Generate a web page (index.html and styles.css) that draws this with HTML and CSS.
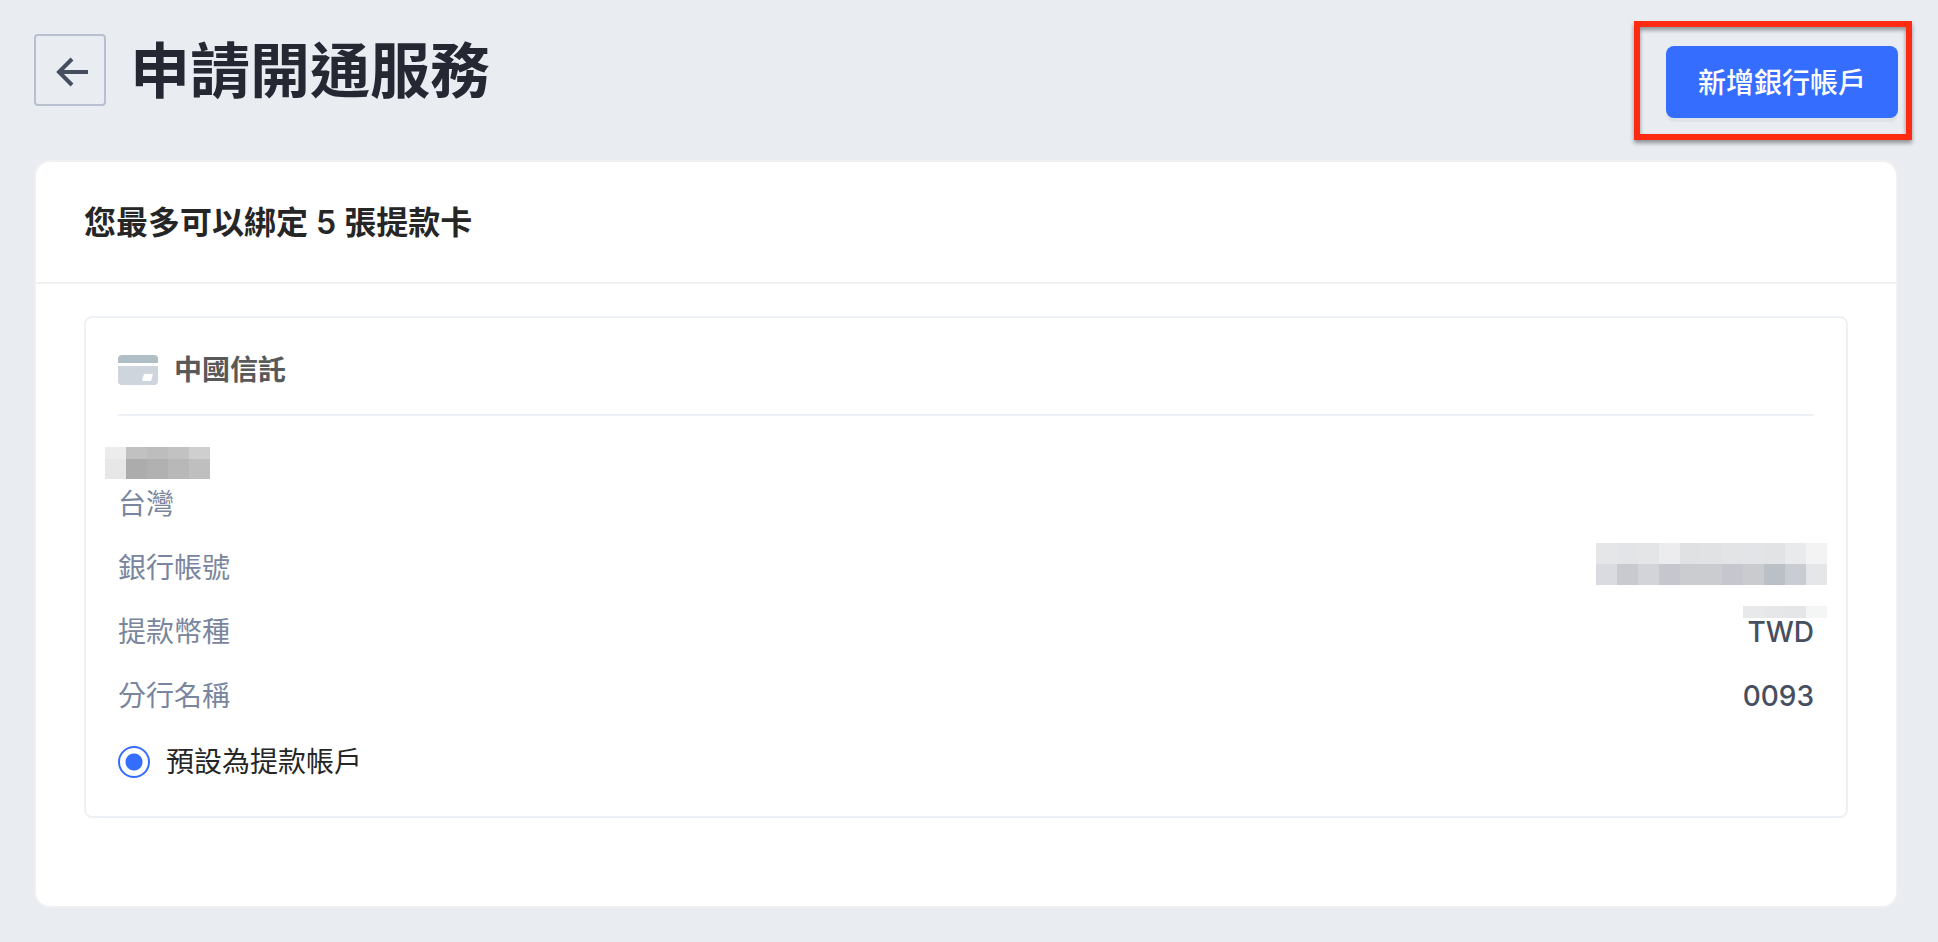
FILE: index.html
```html
<!DOCTYPE html>
<html lang="zh-Hant">
<head>
    <meta charset="UTF-8">
    <meta name="viewport" content="width=device-width, initial-scale=1.0">
    <title>申請開通服務</title>
    <link rel="stylesheet" href="styles.css">
</head>
<body>
    <header class="page-header">
        <button type="button" class="back" aria-label="返回">
            <svg width="36" height="36" viewBox="0 0 36 36" fill="none" stroke="#464f60" stroke-width="4">
                <path d="M36 20H7M20 7L7 20l13 13"/>
            </svg>
        </button>
        <h1 class="page-title">申請開通服務</h1>
        <div class="action">
            <button type="button" class="add-account">新增銀行帳戶</button>
            <span class="highlight"></span>
        </div>
    </header>

    <main class="card">
        <h2 class="card-title">您最多可以綁定 5 張提款卡</h2>
        <div class="card-body">
            <section class="account">
                <!-- Banco -->
                <h3 class="bank">
                    <svg width="40" height="30" viewBox="0 0 40 30">
                        <path fill="#b0bec5" d="M4 0h32a4 4 0 0 1 4 4v4H0V4a4 4 0 0 1 4-4z"/>
                        <path fill="#cfd5dc" d="M0 11h40v15a4 4 0 0 1-4 4H4a4 4 0 0 1-4-4z"/>
                        <path fill="#fff" d="M26 19h9l-2 7h-9z"/>
                    </svg>
                    中國信託
                </h3>

                <div class="owner">
                    <div class="owner-name">
                        <svg class="mask mask-name" width="105" height="32" shape-rendering="crispEdges">
                            <rect x="0" width="21" height="12" fill="#ececec"/>
                            <rect x="21" width="21" height="12" fill="#c1c1c1"/>
                            <rect x="42" width="21" height="12" fill="#bdbdbd"/>
                            <rect x="63" width="21" height="12" fill="#c2c2c2"/>
                            <rect x="84" width="21" height="12" fill="#cfcfcf"/>
                            <rect x="0" y="12" width="21" height="20" fill="#e7e7e7"/>
                            <rect x="21" y="12" width="21" height="20" fill="#acacac"/>
                            <rect x="42" y="12" width="21" height="20" fill="#b1b1b1"/>
                            <rect x="63" y="12" width="21" height="20" fill="#b8b8b8"/>
                            <rect x="84" y="12" width="21" height="20" fill="#bfbfbf"/>
                        </svg>
                    </div>
                    <div class="label">台灣</div>
                </div>

                <dl class="details">
                    <div class="row">
                        <dt class="label">銀行帳號</dt>
                        <dd class="value">
                            <svg class="mask mask-number" width="231" height="42" shape-rendering="crispEdges">
                                <rect x="0" width="21" height="21" fill="#e5e6e8"/>
                                <rect x="21" width="21" height="21" fill="#e2e4e8"/>
                                <rect x="42" width="21" height="21" fill="#e4e5e7"/>
                                <rect x="63" width="21" height="21" fill="#ececee"/>
                                <rect x="84" width="21" height="21" fill="#e0e1e2"/>
                                <rect x="105" width="21" height="21" fill="#e1e2e3"/>
                                <rect x="126" width="21" height="21" fill="#e3e4e6"/>
                                <rect x="147" width="21" height="21" fill="#e2e4e8"/>
                                <rect x="168" width="21" height="21" fill="#e1e3e4"/>
                                <rect x="189" width="21" height="21" fill="#e9eaec"/>
                                <rect x="210" width="21" height="21" fill="#f3f3f3"/>
                                <rect x="0" y="21" width="21" height="21" fill="#d9dbe0"/>
                                <rect x="21" y="21" width="21" height="21" fill="#c9cacf"/>
                                <rect x="42" y="21" width="21" height="21" fill="#d3d4d9"/>
                                <rect x="63" y="21" width="21" height="21" fill="#c6c7ce"/>
                                <rect x="84" y="21" width="21" height="21" fill="#cbccd0"/>
                                <rect x="105" y="21" width="21" height="21" fill="#cbccd0"/>
                                <rect x="126" y="21" width="21" height="21" fill="#c6c7ce"/>
                                <rect x="147" y="21" width="21" height="21" fill="#cacbcf"/>
                                <rect x="168" y="21" width="21" height="21" fill="#bbc0c6"/>
                                <rect x="189" y="21" width="21" height="21" fill="#c9ccd2"/>
                                <rect x="210" y="21" width="21" height="21" fill="#e5e6e8"/>
                            </svg>
                        </dd>
                    </div>
                    <div class="row">
                        <dt class="label">提款幣種</dt>
                        <dd class="value">
                            TWD
                            <svg class="mask mask-currency" width="84" height="12" shape-rendering="crispEdges">
                                <rect x="0" width="21" height="12" fill="#e8e9eb"/>
                                <rect x="21" width="21" height="12" fill="#e6e7e9"/>
                                <rect x="42" width="21" height="12" fill="#e5e6e8"/>
                                <rect x="63" width="21" height="12" fill="#f4f6f6"/>
                            </svg>
                        </dd>
                    </div>
                    <div class="row">
                        <dt class="label">分行名稱</dt>
                        <dd class="value">0093</dd>
                    </div>
                </dl>

                <label class="default-account" for="default-account">
                    <input type="radio" id="default-account" name="default-account" checked>
                    預設為提款帳戶
                </label>
            </section>
        </div>
    </main>
</body>
</html>
```

FILE: styles.css
```css
* {
    box-sizing: border-box;
}
body {
    margin: 0;
    padding: 34px 40px 34px 34px;
    background: #e9edf2;
    color: #262626;
    font-family: Inter, "Noto Sans CJK TC", sans-serif;
    font-size: 28px;
    line-height: 44px;
}
h1, h2, h3, dl, dd {
    margin: 0;
}
svg {
    display: block;
}
.page-header {
    display: flex;
    align-items: flex-start;
    margin-bottom: 42px;
}
.back {
    display: flex;
    align-items: center;
    justify-content: center;
    width: 72px;
    height: 72px;
    padding: 0;
    border: 2px solid #b8bfcf;
    border-radius: 4px;
    background: none;
}
.page-title {
    margin-left: 24px;
    color: #252833;
    font-size: 60px;
    font-weight: 700;
    line-height: 74px;
}
.action {
    position: relative;
    margin-top: 12px;
    margin-left: auto;
}
.add-account {
    display: block;
    height: 72px;
    padding: 0 32px 2px;
    border: 0;
    border-radius: 8px;
    background: #356dff;
    box-shadow: 0 4px 0 rgba(0, 0, 0, 0.04);
    color: #fff;
    font-family: inherit;
    font-size: 28px;
    font-weight: 500;
}
/* Marco rojo alrededor del botón */
.highlight {
    position: absolute;
    top: -25px;
    right: -14px;
    bottom: -22px;
    left: -32px;
    border: 6px solid #ff2a12;
    filter: drop-shadow(0 3px 2px rgba(0, 0, 0, 0.4));
    pointer-events: none;
}
.card {
    border: 2px solid #f0f0f0;
    border-radius: 16px;
    background: #fff;
}
.card-title {
    padding: 39px 48px 37px;
    border-bottom: 2px solid #f0f0f0;
    font-size: 32px;
    font-weight: 600;
}
.card-body {
    padding: 32px 48px 88px;
}
.account {
    padding: 30px 32px 32px;
    border: 2px solid #edf1f6;
    border-radius: 8px;
}
.bank {
    display: flex;
    align-items: center;
    gap: 16px;
    padding-bottom: 22px;
    border-bottom: 2px solid #edf1f6;
    color: #595959;
    font-size: 28px;
    font-weight: 600;
}
.owner {
    padding-top: 22px;
}
.owner-name {
    position: relative;
    height: 44px;
}
.label {
    color: #7a869d;
}
.row {
    display: flex;
    justify-content: space-between;
    margin-top: 20px;
}
.value {
    position: relative;
    color: #464f60;
    font-weight: 500;
}
/* Mosaicos que ocultan los datos */
.mask {
    position: absolute;
}
.mask-name {
    top: 9px;
    left: -13px;
}
.mask-number {
    top: -3px;
    right: -13px;
}
.mask-currency {
    top: -4px;
    right: -13px;
}
.default-account {
    display: flex;
    align-items: center;
    gap: 16px;
    margin-top: 22px;
}
.default-account input {
    appearance: none;
    width: 32px;
    height: 32px;
    margin: 0;
    border: 2px solid #356dff;
    border-radius: 50%;
    background: radial-gradient(circle, #356dff 8px, #fff 9px);
}
```
